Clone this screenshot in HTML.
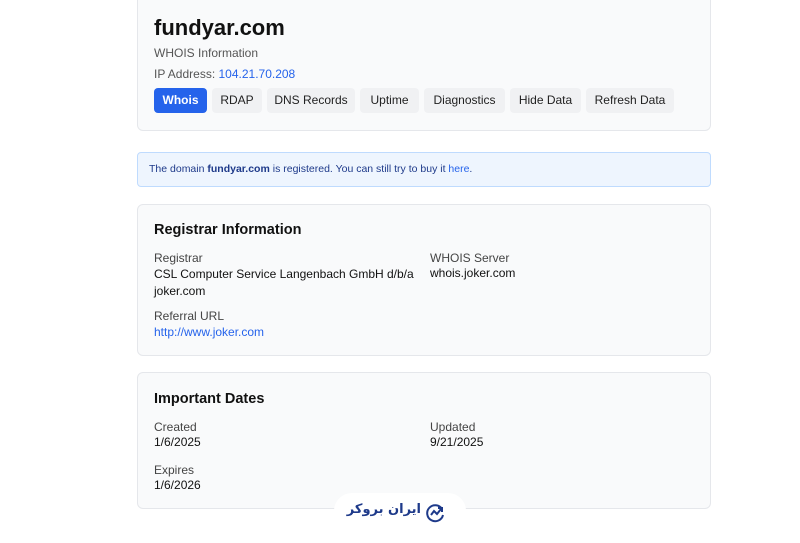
<!DOCTYPE html>
<html><head><meta charset="utf-8"><style>
body{margin:0;width:800px;height:534px;background:#fff;font-family:"Liberation Sans","Noto Sans CJK SC",sans-serif;position:relative;overflow:hidden;color:#111}
.card{position:absolute;left:137px;width:574px;background:#f9fafb;border:1px solid #e5e7eb;border-radius:6px;box-sizing:border-box}
.abs{position:absolute;white-space:nowrap}
.btn{position:absolute;top:88px;height:25px;border-radius:4px;background:#f0f1f3;font-size:12px;line-height:25px;text-align:center;color:#222}
.lbl{font-size:12px;color:#444}
.val{font-size:12px;color:#111}
a{color:#2563eb;text-decoration:none}
</style></head><body>
<div class="card" style="top:-6px;height:137px"></div>
<div class="abs" style="left:154px;top:15px;font-size:22px;font-weight:bold">fundyar.com</div>
<div class="abs" style="left:154px;top:46px;font-size:12px;color:#555">WHOIS Information</div>
<div class="abs" style="left:154px;top:67px;font-size:12px;color:#555">IP Address: <a>104.21.70.208</a></div>
<div class="btn" style="left:154px;width:53px;background:#2563eb;color:#fff;font-weight:bold">Whois</div>
<div class="btn" style="left:212px;width:50px">RDAP</div>
<div class="btn" style="left:267px;width:88px">DNS Records</div>
<div class="btn" style="left:360px;width:59px">Uptime</div>
<div class="btn" style="left:424px;width:81px">Diagnostics</div>
<div class="btn" style="left:510px;width:71px">Hide Data</div>
<div class="btn" style="left:586px;width:88px">Refresh Data</div>

<div class="abs" style="left:137px;top:152px;width:574px;height:35px;box-sizing:border-box;background:#eef5fe;border:1px solid #bfdbfe;border-radius:4px"></div>
<div class="abs" style="left:149px;top:163px;font-size:10.5px;color:#1e3a8a">The domain <b style="font-weight:600">fundyar.com</b> is registered. You can still try to buy it <a>here</a>.</div>

<div class="card" style="top:204px;height:152px"></div>
<div class="abs" style="left:154px;top:222px;font-size:14.5px;font-weight:bold;color:#111">Registrar Information</div>
<div class="abs lbl" style="left:154px;top:251px">Registrar</div>
<div class="abs val" style="left:154px;top:266px;line-height:17px">CSL Computer Service Langenbach GmbH d/b/a<br>joker.com</div>
<div class="abs lbl" style="left:430px;top:251px">WHOIS Server</div>
<div class="abs val" style="left:430px;top:266px">whois.joker.com</div>
<div class="abs lbl" style="left:154px;top:309px">Referral URL</div>
<div class="abs val" style="left:154px;top:325px"><a>http://www.joker.com</a></div>

<div class="card" style="top:372px;height:137px"></div>
<div class="abs" style="left:154px;top:391px;font-size:14.5px;font-weight:bold;color:#111">Important Dates</div>
<div class="abs lbl" style="left:154px;top:420px">Created</div>
<div class="abs val" style="left:154px;top:435px">1/6/2025</div>
<div class="abs lbl" style="left:430px;top:420px">Updated</div>
<div class="abs val" style="left:430px;top:435px">9/21/2025</div>
<div class="abs lbl" style="left:154px;top:463px">Expires</div>
<div class="abs val" style="left:154px;top:478px">1/6/2026</div>

<div class="abs" style="left:334px;top:493px;width:132px;height:50px;background:#fff;border-radius:18px"></div>
<div class="abs" style="left:349px;top:502px;width:72px;text-align:right;font-size:13px;font-weight:bold;color:#1e3a8a;font-family:'DejaVu Sans',sans-serif" dir="rtl">ایران بروکر</div>
<svg class="abs" style="left:426px;top:503px" width="20" height="20" viewBox="0 0 20 20" fill="none" stroke="#1e3a8a" stroke-width="2"><path d="M16 6A8 8 0 1 0 17 12"/><path d="M5 12l3-4 3 3 4-5"/><path d="M12 5h4v4"/></svg>
</body></html>
